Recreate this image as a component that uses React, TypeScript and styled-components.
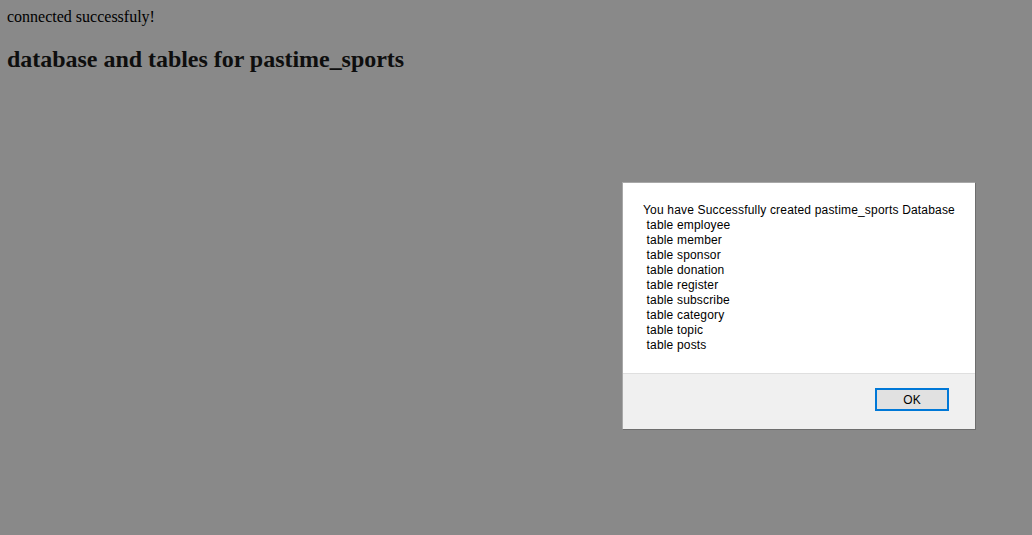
import React from "react";
import styled, { createGlobalStyle } from "styled-components";

const GlobalStyle = createGlobalStyle`
  html, body {
    background: #898989;
  }
  body {
    margin: 8px 8px 8px 7px;
    font-family: "Liberation Serif", "Times New Roman", serif;
    font-size: 16px;
    color: #000;
  }
`;

const Status = styled.div`
  line-height: 18px;
`;

const Title = styled.h2`
  font-size: 24px;
  font-weight: bold;
  margin: 20px 0;
  color: #0e0e0e;
  letter-spacing: -0.03px;
`;

const Dialog = styled.div`
  position: fixed;
  left: 622px;
  top: 182px;
  width: 352px;
  height: 246px;
  display: flex;
  flex-direction: column;
  background: #ffffff;
  border: 1px solid #a8a8a8;
  border-right-color: #6e6e6e;
  border-bottom-color: #6e6e6e;
  font-family: "Liberation Sans", Arial, sans-serif;
  font-size: 12px;
  color: #000;
`;

const Message = styled.div`
  flex: 1;
  padding: 20px 20px 0 20px;
  line-height: 15px;
  white-space: pre;
  letter-spacing: 0.18px;
`;

const Footer = styled.div`
  height: 56px;
  box-sizing: border-box;
  display: flex;
  justify-content: flex-end;
  align-items: flex-start;
  padding: 14px 26px 0 0;
  background: #f0f0f0;
  border-top: 1px solid #dfdfdf;
`;

const OkButton = styled.button`
  width: 74px;
  height: 23px;
  box-sizing: border-box;
  border: 2px solid #0078d7;
  background: #e1e1e1;
  font-family: "Liberation Sans", Arial, sans-serif;
  font-size: 12px;
  color: #000;
  padding: 0;
  outline: 0;
`;

const tables = [
  "employee",
  "member",
  "sponsor",
  "donation",
  "register",
  "subscribe",
  "category",
  "topic",
  "posts",
];

const App = () => {
  const message =
    "You have Successfully created pastime_sports Database\n" +
    tables.map((t) => ` table ${t}`).join("\n");

  return (
    <>
      <GlobalStyle />
      <Status>connected successfuly!</Status>
      <Title>database and tables for pastime_sports</Title>
      <Dialog>
        <Message>{message}</Message>
        <Footer>
          <OkButton>OK</OkButton>
        </Footer>
      </Dialog>
    </>
  );
};

export default App;
